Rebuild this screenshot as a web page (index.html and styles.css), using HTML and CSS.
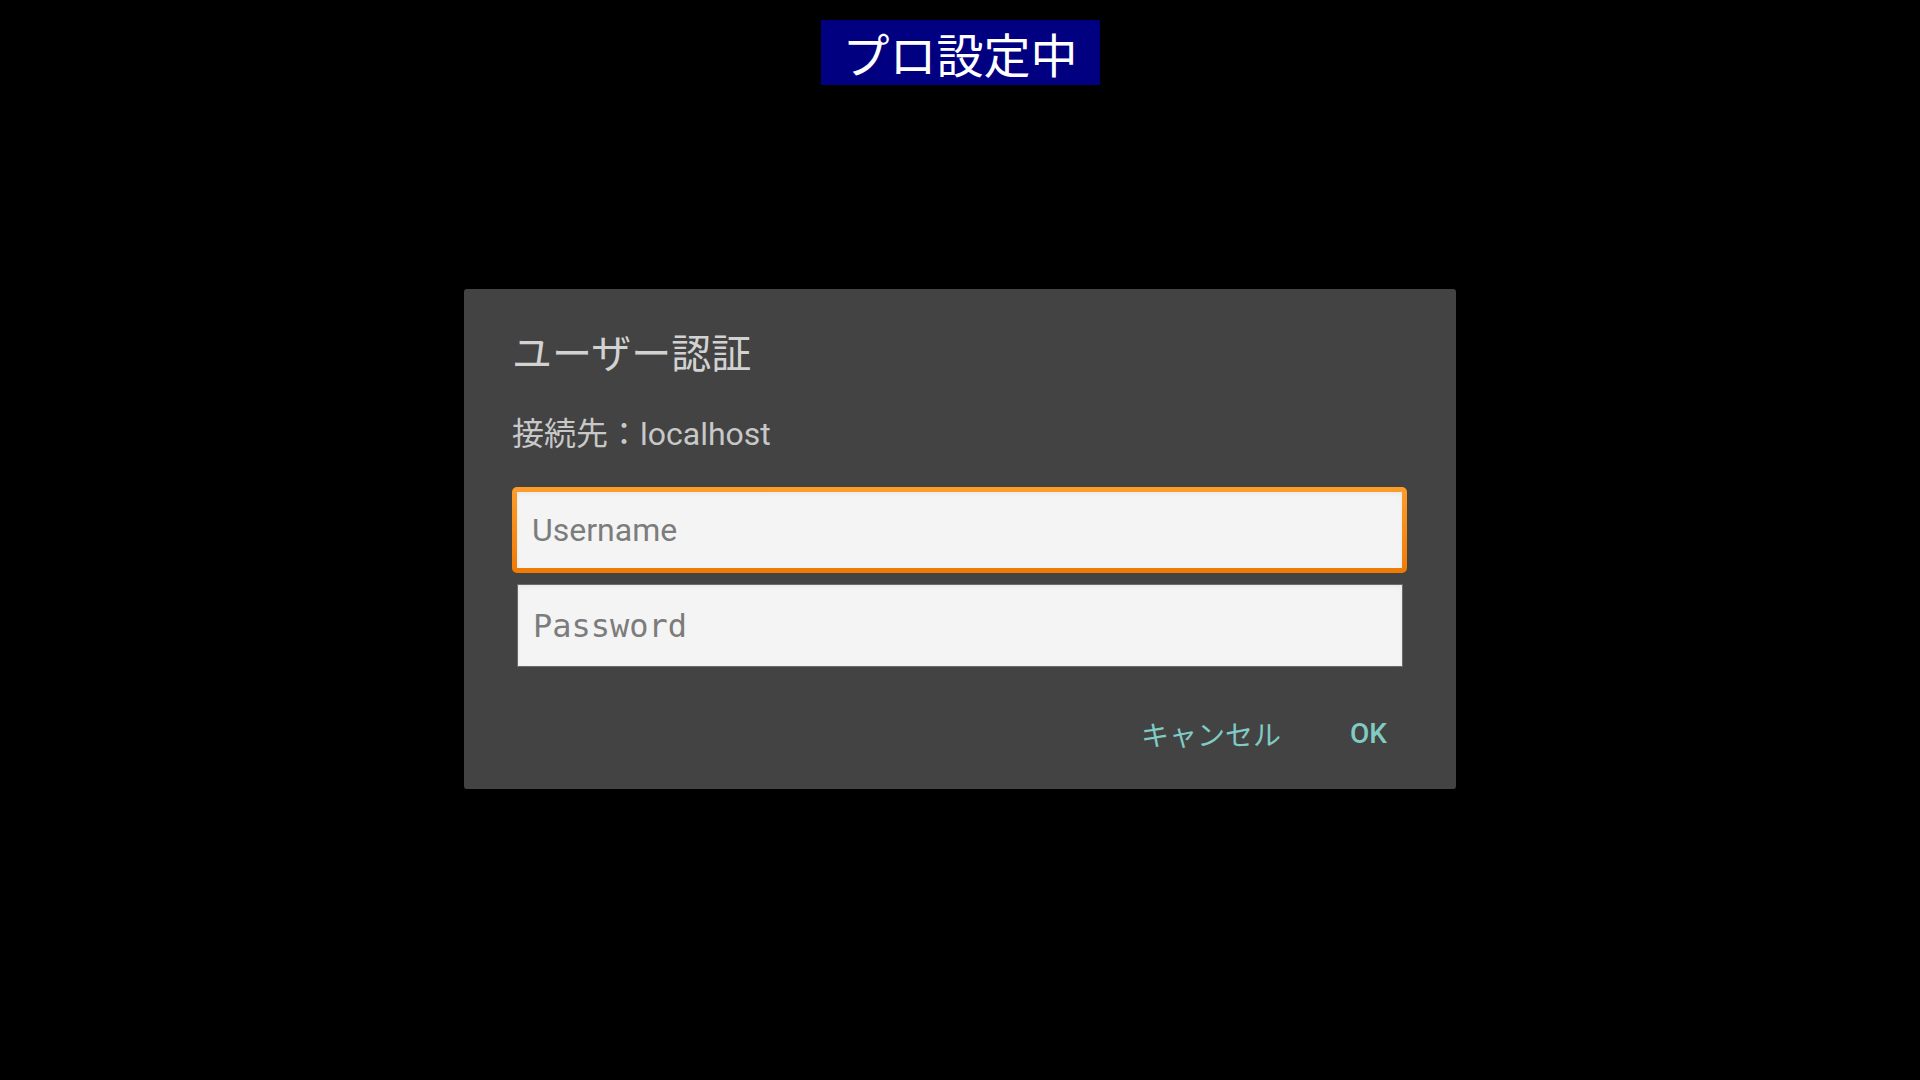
FILE: index.html
```html
<html lang="ja">
    <head>
        <meta charset="UTF-8">
        <title>ユーザー認証</title>
        <link rel="stylesheet" href="styles.css">
    </head>
    <body>
      <div id="mode-banner">プロ設定中</div>
      <div id="auth-dialog">
        <h1 class="dialog-title">ユーザー認証</h1>
        <p class="dialog-host">接続先：localhost</p>
        <form class="dialog-form">
          <input type="text" id="username" class="field field-focused" placeholder="Username">
          <input type="password" id="password" class="field field-mono" placeholder="Password">
          <div class="dialog-buttons">
            <button type="button" class="dialog-button">キャンセル</button>
            <button type="submit" class="dialog-button dialog-button-ok">OK</button>
          </div>
        </form>
      </div>
    </body>
</html>
```

FILE: styles.css
```css
body {
    background: #000;
    color: #ccc;
    font-family: Roboto, "Noto Sans CJK JP", sans-serif;
    margin: 0;
    padding: 20px 0 0 0;
    display: flex;
    flex-direction: column;
    align-items: center;
}

#mode-banner {
    background: #000080;
    color: #fff;
    font-family: "Noto Sans CJK JP", sans-serif;
    font-size: 47px;
    line-height: 65px;
    height: 65px;
    padding: 0 22px;
}

#auth-dialog {
    box-sizing: border-box;
    width: 992px;
    height: 500px;
    margin-top: 204px;
    padding: 42px 48px 0 48px;
    background: #434343;
    border-radius: 3px;
}

.dialog-title {
    margin: 0;
    font-size: 40px;
    font-weight: normal;
    line-height: 48px;
    color: #d2d2d2;
}

.dialog-host {
    margin: 35px 0 0 0;
    font-size: 32px;
    line-height: 40px;
    color: #c8c8c8;
}

.dialog-form {
    display: flex;
    flex-direction: column;
    margin: 33px 0 0 0;
}

.field {
    box-sizing: border-box;
    background: #f4f4f4;
    color: #333;
    border: 1px solid #6a6a6a;
    box-shadow: inset 0 2px 4px rgba(0, 0, 0, 0.05);
    font-family: Roboto, sans-serif;
    font-size: 32px;
    padding: 0 15px;
    outline: none;
}

.field::placeholder { color: #7c7c7c; }

.field-focused {
    width: 895px;
    height: 86px;
    border: 5px solid transparent;
    border-radius: 5px;
    background: linear-gradient(#f4f4f4, #f4f4f4) padding-box,
                linear-gradient(#fd9d2a, #ef7a04) border-box;
}

.field-mono {
    width: 886px;
    height: 83px;
    margin: 11px 0 0 5px;
    font-family: "DejaVu Sans Mono", monospace;
}

.dialog-buttons {
    display: flex;
    justify-content: flex-end;
    gap: 37px;
    margin-top: 47px;
    padding-right: 5px;
}

.dialog-button {
    background: none;
    border: 0;
    padding: 0 16px;
    color: #80cbc4;
    font-family: "Noto Sans CJK JP", sans-serif;
    font-size: 28px;
    line-height: 40px;
}

.dialog-button-ok {
    font-family: Roboto, sans-serif;
    font-weight: 500;
}
```
